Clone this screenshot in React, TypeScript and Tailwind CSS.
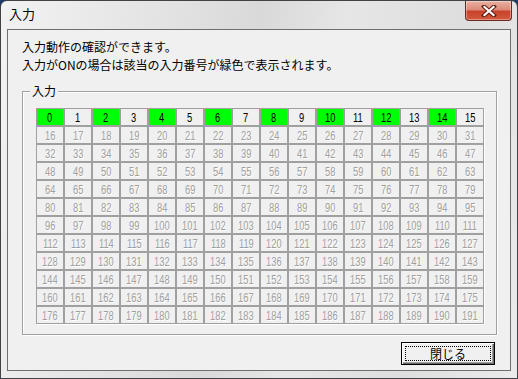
const cells = Array.from({ length: 192 }, (_, i) => i);

function Cell({ n }: { n: number }) {
  const enabled = n < 16;
  const on = enabled && n % 2 === 0;
  return (
    <div
      className={
        "h-[18px] flex items-center justify-center border border-[#a0a0a0] text-[13px] leading-none [font-family:'Liberation_Sans',sans-serif] " +
        (on ? "bg-[#00ff00] text-black" : enabled ? "text-black" : "text-[#a0a0a0] [text-shadow:1px_1px_0_#fff]")
      }
    >
      <span className="inline-block scale-x-[0.72]">{n}</span>
    </div>
  );
}

function CloseButton() {
  return (
    <div className="w-[47px] h-[20px] rounded-b-[4px] border border-t-0 border-[#6b2a1f] bg-[linear-gradient(to_bottom,#e9b1a3_0%,#dd8b78_45%,#c8432b_55%,#d2593f_100%)] flex items-center justify-center shadow-[inset_0_0_0_1px_rgba(255,255,255,0.35)]">
      <svg width="16" height="12" viewBox="0 0 16 12">
        <path d="M3 1.5 L13 10.5 M13 1.5 L3 10.5" stroke="#5a1d12" strokeWidth="4" strokeLinecap="square" />
        <path d="M3.5 2 L12.5 10 M12.5 2 L3.5 10" stroke="#ffffff" strokeWidth="2.2" strokeLinecap="square" />
      </svg>
    </div>
  );
}

export default function App() {
  return (
    <div
      className="w-[518px] h-[379px] bg-[#1c3a6a]"
      style={{ fontFamily: '"Noto Sans CJK JP", "Liberation Sans", sans-serif' }}
    >
      <div className="w-full h-full rounded-t-[7px] border border-[#3f4347] bg-[linear-gradient(100deg,#f2f2f2_0%,#e2e2e2_30%,#d9d9d9_45%,#e6e6e6_60%,#dedede_80%,#ebebeb_100%)] flex flex-col">
        <div className="h-[28px] flex items-start justify-between shrink-0">
          <div className="pl-[8px] pt-[5px] text-[13px] leading-[16px] text-black">入力</div>
          <div className="mr-[5px]">
            <CloseButton />
          </div>
        </div>
        <div className="mx-[6px] mb-[7px] flex-1 border border-[#6e6e6e] bg-[#f0f0f0] flex flex-col text-[12px] text-black">
          <div className="pl-[14px] pt-[8px] leading-[18px]">
            <p>入力動作の確認ができます。</p>
            <p>入力がONの場合は該当の入力番号が緑色で表示されます。</p>
          </div>
          <div className="relative mt-[17px] ml-[14px] mr-[13px] border border-[#a0a0a0] shadow-[inset_1px_1px_0_#fff,1px_1px_0_#fff] pt-[16px] pl-[13px] pr-[12px] pb-[10px]">
            <span className="absolute left-[7px] top-[-9px] px-[2px] bg-[#f0f0f0] leading-[16px]">入力</span>
            <div className="grid grid-cols-[repeat(16,28px)] shadow-[1px_1px_0_#fff]">
              {cells.map((n) => (
                <Cell key={n} n={n} />
              ))}
            </div>
          </div>
          <div className="flex justify-end mt-[7px] mr-[15px]">
            <div className="w-[94px] h-[23px] border border-black bg-[#f0f0f0] shadow-[inset_1px_1px_0_#fff,inset_-1px_-1px_0_#696969,inset_-2px_-2px_0_#a0a0a0] p-[3px]">
              <div className="w-full h-full border border-dotted border-black flex items-center justify-center leading-none text-[12px]">
                閉じる
              </div>
            </div>
          </div>
        </div>
      </div>
    </div>
  );
}
